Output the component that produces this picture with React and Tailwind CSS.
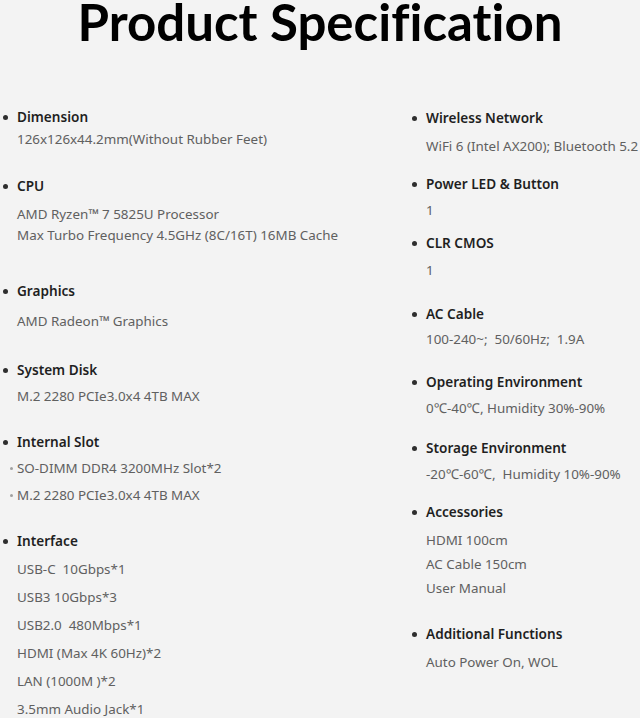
const left = [
  {
    title: "Dimension",
    mt: "mt-0",
    first: "mt-[2px]",
    lines: ["126x126x44.2mm(Without Rubber Feet)"],
    step: "mt-0",
  },
  {
    title: "CPU",
    mt: "mt-[27px]",
    first: "mt-[8px]",
    lines: ["AMD Ryzen™ 7 5825U Processor", "Max Turbo Frequency 4.5GHz (8C/16T) 16MB Cache"],
    step: "mt-[1px]",
  },
  {
    title: "Graphics",
    mt: "mt-[36px]",
    first: "mt-[10px]",
    lines: ["AMD Radeon™ Graphics"],
    step: "mt-0",
  },
  {
    title: "System Disk",
    mt: "mt-[29px]",
    first: "mt-[6px]",
    lines: ["M.2 2280 PCIe3.0x4 4TB MAX"],
    step: "mt-0",
  },
  {
    title: "Internal Slot",
    mt: "mt-[26px]",
    first: "mt-[6px]",
    lines: ["SO-DIMM DDR4 3200MHz Slot*2", "M.2 2280 PCIe3.0x4 4TB MAX"],
    step: "mt-[7px]",
    sub: true,
  },
  {
    title: "Interface",
    mt: "mt-[26px]",
    first: "mt-[8px]",
    lines: [
      "USB-C  10Gbps*1",
      "USB3 10Gbps*3",
      "USB2.0  480Mbps*1",
      "HDMI (Max 4K 60Hz)*2",
      "LAN (1000M )*2",
      "3.5mm Audio Jack*1",
    ],
    step: "mt-[8px]",
  },
];

const right = [
  {
    title: "Wireless Network",
    mt: "mt-0",
    first: "mt-[8px]",
    lines: ["WiFi 6 (Intel AX200); Bluetooth 5.2"],
    step: "mt-0",
  },
  { title: "Power LED & Button", mt: "mt-[18px]", first: "mt-[6px]", lines: ["1"], step: "mt-0" },
  { title: "CLR CMOS", mt: "mt-[13px]", first: "mt-[7px]", lines: ["1"], step: "mt-0" },
  {
    title: "AC Cable",
    mt: "mt-[24px]",
    first: "mt-[5px]",
    lines: ["100-240~;  50/60Hz;  1.9A"],
    step: "mt-0",
  },
  {
    title: "Operating Environment",
    mt: "mt-[23px]",
    first: "mt-[6px]",
    lines: ["0℃-40℃, Humidity 30%-90%"],
    step: "mt-0",
  },
  {
    title: "Storage Environment",
    mt: "mt-[20px]",
    first: "mt-[6px]",
    lines: ["-20℃-60℃,  Humidity 10%-90%"],
    step: "mt-0",
  },
  {
    title: "Accessories",
    mt: "mt-[18px]",
    first: "mt-[8px]",
    lines: ["HDMI 100cm", "AC Cable 150cm", "User Manual"],
    step: "mt-[4px]",
  },
  {
    title: "Additional Functions",
    mt: "mt-[26px]",
    first: "mt-[8px]",
    lines: ["Auto Power On, WOL"],
    step: "mt-0",
  },
];

function Spec({ item }) {
  return (
    <div className={item.mt}>
      <div className="flex items-center h-[20px]">
        <span className="w-[5px] h-[5px] rounded-full bg-[#2e2e2e] mr-[9px] shrink-0" />
        <span className="text-[13.6px] font-semibold text-[#1f1f1f] whitespace-nowrap">{item.title}</span>
      </div>
      {item.lines.map((line, i) => (
        <div
          key={i}
          className={
            "h-[20px] leading-[20px] text-[13.4px] text-[#606060] whitespace-pre flex items-center " +
            (i === 0 ? item.first : item.step) +
            (item.sub ? " pl-[7px]" : " pl-[14px]")
          }
        >
          {item.sub && <span className="w-[3px] h-[3px] rounded-full bg-[#a0a0a0] mr-[4px] shrink-0" />}
          {line}
        </div>
      ))}
    </div>
  );
}

export default function App() {
  return (
    <div className="w-[640px] h-[718px] overflow-hidden bg-[#f3f3f3]" style={{ fontFamily: "'Noto Sans', 'Open Sans', sans-serif" }}>
      <h1
        className="text-center text-[51px] font-bold text-black leading-[44px] tracking-normal [font-variant-ligatures:none]"
        style={{ fontFamily: "'Lato', 'Open Sans', sans-serif" }}
      >
        Product Specification
      </h1>
      <div className="flex mt-[63px]">
        <div className="w-[408px] pl-[3px]">
          {left.map((item) => (
            <Spec key={item.title} item={item} />
          ))}
        </div>
        <div className="flex-1 pl-[4px] pt-[1px]">
          {right.map((item) => (
            <Spec key={item.title} item={item} />
          ))}
        </div>
      </div>
    </div>
  );
}
